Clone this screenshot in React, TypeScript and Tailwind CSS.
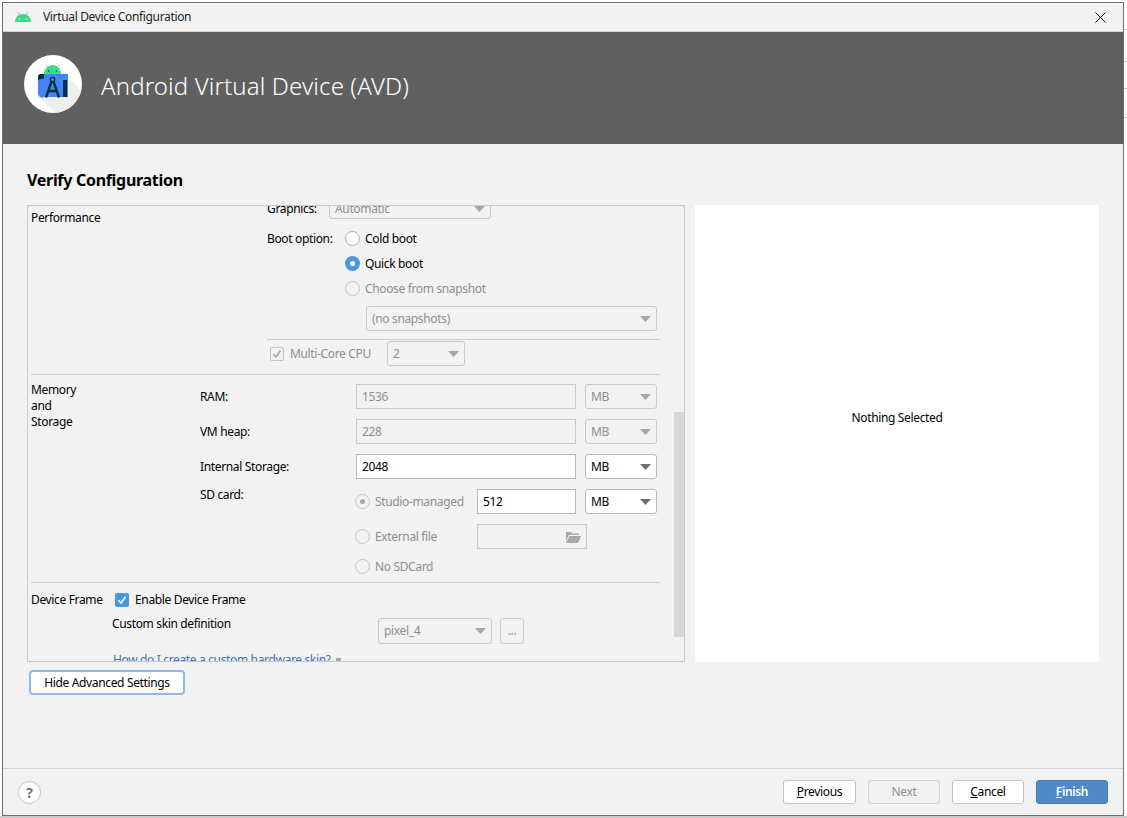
const font = "font-['Noto_Sans','Open_Sans',sans-serif]";

function Caret({ disabled }: { disabled?: boolean }) {
  return (
    <svg width="11" height="6" viewBox="0 0 11 6" className="shrink-0">
      <path d="M0 0h11L5.5 6z" fill={disabled ? "#a6a6a6" : "#6e6e6e"} />
    </svg>
  );
}

function Combo({
  value,
  disabled,
  className,
  height = "h-[25px]",
}: {
  value: string;
  disabled?: boolean;
  className: string;
  height?: string;
}) {
  return (
    <div
      className={`flex items-center justify-between rounded-[3px] border pl-[5px] pr-[5px] ${height} ${
        disabled ? "border-[#c9c9c9] bg-[#f2f2f2] text-[#8f8f8f]" : "border-[#b9b9b9] bg-white text-black"
      } ${className}`}
    >
      <span>{value}</span>
      <Caret disabled={disabled} />
    </div>
  );
}

function TextBox({ value, disabled, className }: { value: string; disabled?: boolean; className: string }) {
  return (
    <div
      className={`flex h-[25px] items-center border pl-[5px] ${
        disabled ? "border-[#c9c9c9] bg-[#f2f2f2] text-[#8f8f8f]" : "border-[#b9b9b9] bg-white text-black"
      } ${className}`}
    >
      {value}
    </div>
  );
}

function Radio({ label, state }: { label: string; state: "on" | "off" | "disabled" | "disabled-on" }) {
  const dim = state === "disabled" || state === "disabled-on";
  return (
    <div className="flex h-[25px] items-center gap-[5px]">
      {state === "on" ? (
        <span className="flex size-[15px] items-center justify-center rounded-full bg-[#4a98e4]">
          <span className="size-[5px] rounded-full bg-white" />
        </span>
      ) : (
        <span
          className={`flex size-[15px] items-center justify-center rounded-full border ${
            dim ? "border-[#c4c4c4] bg-[#f2f2f2]" : "border-[#b0b0b0] bg-white"
          }`}
        >
          {state === "disabled-on" && <span className="size-[5px] rounded-full bg-[#a8a8a8]" />}
        </span>
      )}
      <span className={dim ? "text-[#8f8f8f]" : "text-black"}>{label}</span>
    </div>
  );
}

function Check({ disabled }: { disabled?: boolean }) {
  return (
    <span
      className={`flex size-[14px] items-center justify-center rounded-[2px] ${
        disabled ? "border border-[#c4c4c4] bg-[#f2f2f2]" : "bg-[#4a98e4]"
      }`}
    >
      <svg width="10" height="10" viewBox="0 0 10 10" fill="none">
        <path d="M1.5 5.2 4 8l4.5-6.2" stroke={disabled ? "#a6a6a6" : "#ffffff"} strokeWidth="1.6" />
      </svg>
    </span>
  );
}

function FooterButton({
  mark,
  rest,
  variant,
  width = "w-[72px]",
}: {
  mark: string;
  rest: string;
  variant?: "disabled" | "primary";
  width?: string;
}) {
  const look =
    variant === "primary"
      ? "border-[#437cb8] bg-[#4f89c8] text-white font-semibold"
      : variant === "disabled"
        ? "border-[#d0d0d0] bg-[#f2f2f2] text-[#8f8f8f]"
        : "border-[#c4c4c4] bg-white text-black";
  return (
    <div className={`flex h-[24px] items-center justify-center rounded-[3px] border ${width} ${look}`}>
      <span>
        {variant === "disabled" ? mark : <span className="underline">{mark}</span>}
        {rest}
      </span>
    </div>
  );
}

function AndroidHead({ className }: { className: string }) {
  return (
    <svg viewBox="0 0 16 10" className={className}>
      <path d="M3.2 0.4 4.8 3M12.8 0.4 11.2 3" stroke="#3ddc84" strokeWidth="0.9" fill="none" />
      <path d="M0 10a8 8 0 0 1 16 0z" fill="#3ddc84" />
      <circle cx="4.6" cy="7" r="0.7" fill="#f2f2f2" />
      <circle cx="11.4" cy="7" r="0.7" fill="#f2f2f2" />
    </svg>
  );
}

function StudioLogo() {
  return (
    <svg viewBox="24 55 58 58" className="size-[58px] shrink-0">
      <defs>
        <clipPath id="disc">
          <circle cx="53" cy="84" r="29" />
        </clipPath>
      </defs>
      <circle cx="53" cy="84" r="29" fill="#ffffff" />
      <path d="M62 72 84 94V114H58L38 97z" fill="#eeeeee" clipPath="url(#disc)" />
      <path d="M44 74a8.500 9 0 0 1 17 0z" fill="#3ddc84" />
      <path d="M46 65l2 3M59 65l-2 3" stroke="#3ddc84" strokeWidth="0.8" />
      <circle cx="48.500" cy="71" r="0.700" fill="#073042" />
      <circle cx="56.500" cy="71" r="0.700" fill="#073042" />
      <path d="M40 74H68V97H44a4 4 0 0 1-6-3V77z" fill="#4285f4" />
      <path d="M38 78a3 3 0 0 1 3-4h3v5a3 3 0 0 0-3 0 3 3 0 0 0-3 2z" fill="#073042" />
      <circle cx="52.500" cy="79.500" r="2.200" fill="none" stroke="#073042" strokeWidth="1.200" />
      <path d="M51.500 81.500 46 97.500M53.500 81.500 59 97.500M49 91h7" stroke="#073042" strokeWidth="2.400" fill="none" />
      <path d="M63 80h4v17h-4z" fill="#073042" />
    </svg>
  );
}

export default function App() {
  return (
    <div className={`relative h-[818px] w-[1127px] overflow-hidden bg-white pl-[2px] pt-[2px] text-[12px] leading-none tracking-[-0.35px] ${font}`}>
      {/* What shows of the editor behind the dialog */}
      <div className="absolute inset-x-0 bottom-0 h-[2px] bg-[#c9c9c9]" />
      <div className="absolute right-0 top-[29px] h-px w-[3px] bg-[#c9c9c9]" />
      <div className="absolute right-0 top-[61px] h-px w-[3px] bg-[#c9c9c9]" />
      <div className="absolute right-0 top-[88px] h-px w-[3px] bg-[#c9c9c9]" />
      <div className="absolute right-0 top-[117px] h-px w-[3px] bg-[#c9c9c9]" />

      <div className="relative flex h-[814px] w-[1122px] flex-col border border-[#6e6e6e] bg-[#f2f2f2]">
        {/* Title bar */}
        <div className="flex h-[29px] shrink-0 items-center border-b border-[#d0d0d0] pl-[12px] pr-[17px]">
          <AndroidHead className="h-[10px] w-[16px]" />
          <span className="ml-[12px] text-[#222222]">Virtual Device Configuration</span>
          <svg width="11" height="11" viewBox="0 0 11 11" className="ml-auto" fill="none">
            <path d="M0.5 0.5 10.500 10.500M10.500 0.500 0.500 10.500" stroke="#111111" strokeWidth="1" />
          </svg>
        </div>

        {/* Banner */}
        <div className="flex h-[112px] shrink-0 items-start bg-[#606060] pl-[21px] pt-[23px]">
          <StudioLogo />
          <span className="ml-[19px] mt-[19px] text-[24px] font-light tracking-[0.13px] text-white">Android Virtual Device (AVD)</span>
        </div>

        {/* Body */}
        <div className="flex min-h-0 flex-1 flex-col pl-[24px]">
          <div className="mt-[27px] h-[18px] text-[16px] font-bold leading-[18px] tracking-[-0.3px] text-black">Verify Configuration</div>
          <div className="mt-[16px] flex gap-[10px]">
            <div className="relative h-[457px] w-[658px] overflow-hidden border border-[#c9c9c9]">
              <div className="-mt-[9px] pl-[3px] pr-[24px]">
                {/* Performance */}
                <div className="flex h-[177px]">
                  <div className="w-[236px] pt-[15px] text-black">Performance</div>
                  <div className="flex-1">
                    <div className="flex h-[22px] items-center">
                      <span className="w-[62px] pt-[2px]">Graphics:</span>
                      <Combo value="Automatic" disabled height="h-[22px] pt-[2px]" className="w-[162px]" />
                    </div>
                    <div className="mt-[7px] flex">
                      <span className="flex h-[25px] w-[78px] items-center">Boot option:</span>
                      <div>
                        <Radio label="Cold boot" state="off" />
                        <Radio label="Quick boot" state="on" />
                        <Radio label="Choose from snapshot" state="disabled" />
                      </div>
                    </div>
                    <Combo value="(no snapshots)" disabled className="ml-[99px] mt-[5px] w-[291px]" />
                    <div className="mt-[8px] h-px bg-[#cfcfcf]" />
                    <div className="mt-px flex h-[25px] items-center pl-[3px]">
                      <Check disabled />
                      <span className="ml-[6px] w-[97px] text-[#8f8f8f]">Multi-Core CPU</span>
                      <Combo value="2" disabled className="w-[78px]" />
                    </div>
                  </div>
                </div>
                <div className="h-px bg-[#cfcfcf]" />

                {/* Memory and Storage */}
                <div className="flex h-[207px] pt-[9px]">
                  <div className="-mt-[2px] w-[169px] leading-[16px]">
                    Memory
                    <br />
                    and
                    <br />
                    Storage
                  </div>
                  <div className="flex-1">
                    <div className="flex items-center">
                      <span className="w-[156px]">RAM:</span>
                      <TextBox value="1536" disabled className="w-[220px]" />
                      <Combo value="MB" disabled className="ml-[9px] w-[72px]" />
                    </div>
                    <div className="mt-[10px] flex items-center">
                      <span className="w-[156px]">VM heap:</span>
                      <TextBox value="228" disabled className="w-[220px]" />
                      <Combo value="MB" disabled className="ml-[9px] w-[72px]" />
                    </div>
                    <div className="mt-[10px] flex items-center">
                      <span className="w-[156px]">Internal Storage:</span>
                      <TextBox value="2048" className="w-[220px]" />
                      <Combo value="MB" className="ml-[9px] w-[72px]" />
                    </div>
                    <div className="mt-[10px] flex">
                      <span className="w-[155px]">SD card:</span>
                      <div className="flex-1">
                        <div className="flex items-center">
                          <div className="w-[122px]">
                            <Radio label="Studio-managed" state="disabled-on" />
                          </div>
                          <TextBox value="512" className="w-[99px]" />
                          <Combo value="MB" className="ml-[9px] w-[72px]" />
                        </div>
                        <div className="mt-[10px] flex items-center">
                          <div className="w-[122px]">
                            <Radio label="External file" state="disabled" />
                          </div>
                          <div className="flex h-[25px] w-[110px] items-center justify-end border border-[#c9c9c9] pr-[5px]">
                            <svg width="15" height="12" viewBox="0 0 15 12">
                              <path d="M0 1h5l1.500 1.500H13V4H3L0 10z" fill="#a9a9a9" />
                              <path d="M3.500 5H15l-3 7H0z" fill="#a9a9a9" />
                            </svg>
                          </div>
                        </div>
                        <div className="mt-[5px]">
                          <Radio label="No SDCard" state="disabled" />
                        </div>
                      </div>
                    </div>
                  </div>
                </div>
                <div className="h-px bg-[#cfcfcf]" />

                {/* Device Frame */}
                <div className="flex h-[23px] items-center pt-[11px]">
                  <span className="w-[84px]">Device Frame</span>
                  <Check />
                  <span className="ml-[6px]">Enable Device Frame</span>
                </div>
                <div className="mt-[12px] flex h-[26px]">
                  <span className="ml-[81px] w-[266px]">Custom skin definition</span>
                  <Combo value="pixel_4" disabled height="h-[26px]" className="w-[114px]" />
                  <div className="ml-[8px] flex h-[26px] w-[24px] items-center justify-center rounded-[3px] border border-[#c9c9c9] text-[#8f8f8f]">
                    ...
                  </div>
                </div>
                <div className="ml-[82px] mt-[10px] flex items-center gap-[5px] text-[#3b74b8]">
                  How do I create a custom hardware skin?
                  <svg width="5" height="5" viewBox="0 0 5 5" className="shrink-0">
                    <path d="M0 0h5v5H0z" fill="#a6a6a6" />
                  </svg>
                </div>
              </div>
              {/* Scrollbar thumb */}
              <div className="absolute right-0 top-[206px] h-[225px] w-[10px] bg-[#d6d6d6]" />
            </div>

            {/* Preview */}
            <div className="flex h-[457px] w-[404px] items-center justify-center bg-white pb-[32px] text-black">Nothing Selected</div>
          </div>

          <div className="ml-[2px] mt-[8px] flex h-[25px] w-[156px] items-center justify-center rounded-[4px] border-2 border-[#8db9ec] bg-white text-black">
            Hide Advanced Settings
          </div>
        </div>

        {/* Footer */}
        <div className="flex h-[47px] shrink-0 items-start border-t border-[#d0d0d0] pl-[15px] pr-[15px] pt-[11px]">
          <div className="mt-px flex size-[23px] items-center justify-center rounded-full border border-[#c4c4c4] bg-white text-[14px] font-bold text-[#707070]">
            ?
          </div>
          <div className="ml-auto flex gap-[12px]">
            <FooterButton mark="P" rest="revious" width="w-[73px]" />
            <FooterButton mark="Next" rest="" variant="disabled" />
            <FooterButton mark="C" rest="ancel" />
            <FooterButton mark="F" rest="inish" variant="primary" />
          </div>
        </div>
      </div>
    </div>
  );
}
